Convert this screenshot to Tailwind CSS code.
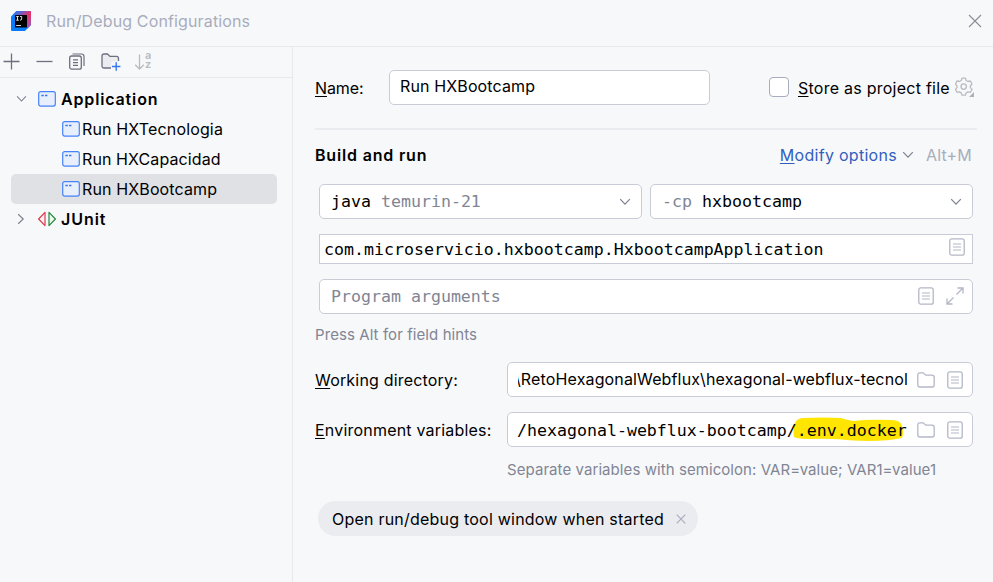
<!DOCTYPE html>
<html lang="es">
<head>
<meta charset="utf-8">
<title>Run/Debug Configurations</title>
<script src="https://cdn.jsdelivr.net/npm/@tailwindcss/browser@4"></script>
</head>
<body class="w-[993px] h-[582px] overflow-hidden bg-[#f7f8fa] text-black text-[16px] leading-[20px] font-[family-name:Inter,sans-serif] whitespace-nowrap">
<svg class="hidden">
  <symbol id="app" viewBox="0 0 18 16"><rect x=".7" y=".7" width="16.6" height="14.4" rx="2" fill="#e7effd" stroke="#4682fa" stroke-width="1.2"/><path d="M3.4 4.5h2.4M7 4.5h2.4" stroke="#3574f0" stroke-width="1.3"/></symbol>
  <symbol id="list" viewBox="0 0 16 18"><rect x=".8" y=".8" width="14.4" height="16.4" rx="2" fill="none" stroke="#b4b8c6" stroke-width="1.3"/><path d="M4 6h8M4 9h8M4 12h8" stroke="#b4b8c6" stroke-width="1.2"/></symbol>
  <symbol id="folder" viewBox="0 0 18 16"><path d="M.8 3.2Q.8.8 3 .8H6.2L8.8 3.2H15Q17.2 3.2 17.2 5.4V12.8Q17.2 15 15 15H3Q.8 15 .8 12.8Z" fill="none" stroke="#b4b8c6" stroke-width="1.3"/></symbol>
  <symbol id="chev" viewBox="0 0 12 8"><path d="M1.2 1.2 6 6.2 10.8 1.2" fill="none" stroke="#7c8090" stroke-width="1.2"/></symbol>
</svg>
<div class="flex flex-col h-full">
  <header class="h-[47px] border-b border-[#e8e9ed] flex items-center pl-[11px] pr-[11px] pb-[4px]">
    <svg class="w-[20px] h-[20px]" viewBox="0 0 20 20">
      <defs><linearGradient id="g" x1="5" y1="3" x2="18" y2="16" gradientUnits="userSpaceOnUse"><stop offset="0" stop-color="#3f6fe0"/><stop offset=".35" stop-color="#b0479a"/><stop offset=".5" stop-color="#f0305c"/><stop offset="1" stop-color="#9a58c0"/></linearGradient></defs>
      <path d="M0 5.500 5.500 0H19Q20 0 20 1V14L14 20H1Q0 20 0 19Z" fill="#087cfa"/>
      <path d="M2.500 3 5.500 0H19Q20 0 20 1V14L16 18V4H2.500Z" fill="url(#g)"/>
      <rect x="4" y="4" width="12" height="12.500" fill="#000"/>
      <path d="M5.200 5.500H7.800M6.500 5.500V9.200M5.200 9.200H7.800M9 5.500H10.700V8Q10.700 9.200 9 9.200M5.200 14.500H10" fill="none" stroke="#fff" stroke-width=".85"/>
    </svg>
    <span class="ml-[15px] text-[#a8adbd] tracking-[0.14px]">Run/Debug Configurations</span>
    <svg class="ml-auto w-[14px] h-[14px]" viewBox="0 0 14 14"><path d="M1 1 13 13M13 1 1 13" stroke="#898d96" stroke-width="1.1"/></svg>
  </header>
  <div class="flex flex-1">
    <aside class="w-[293px] border-r border-[#e8e9ed]">
      <div class="h-[31px] border-b border-[#e8e9ed] flex items-center pl-[3px] pb-[1px]">
        <svg class="w-[17px] h-[17px]" viewBox="0 0 17 17"><path d="M.5 8.500h16M8.500.5v16" stroke="#6c707e" stroke-width="1.3"/></svg>
        <svg class="ml-[16px] w-[17px] h-[17px]" viewBox="0 0 17 17"><path d="M.5 8.500h16" stroke="#6c707e" stroke-width="1.3"/></svg>
        <svg class="ml-[16px] w-[16px] h-[17px]" viewBox="0 0 16 17"><path d="M3.500 1H12.500Q15 1 15 3.500V13" fill="none" stroke="#6c707e" stroke-width="1.2"/><rect x=".7" y="3" width="11.600" height="13.200" rx="2" fill="#f7f8fa" stroke="#6c707e" stroke-width="1.3"/><path d="M4 6.800h5M4 9.600h5M4 12.400h5" stroke="#6c707e" stroke-width="1.2"/></svg>
        <svg class="ml-[16px] w-[20px] h-[19px]" viewBox="0 0 20 19"><path d="M10 16H3Q1 16 1 14V4Q1 2 3 2H6.500L9 4.400H15.500Q17.500 4.400 17.500 6.400V9" fill="#ebecf0" stroke="#6c707e" stroke-width="1.3"/><path d="M10.500 9.500H19V19H10.500Z" fill="#f7f8fa"/><path d="M11 14.500h8.400M15.200 10.300v8.400" stroke="#3574f0" stroke-width="1.4"/></svg>
        <div class="ml-[13px] flex text-[#b9bbc0]">
          <svg class="w-[11px] h-[18px]" viewBox="0 0 11 18"><path d="M5.500 1.500V16M1.200 11.800 5.500 16 9.800 11.800" fill="none" stroke="currentColor" stroke-width="1.3"/></svg>
          <div class="flex flex-col -mt-[2px] text-[11px] leading-[9px] font-semibold"><span>a</span><span>z</span></div>
        </div>
      </div>
      <div class="pt-[6px] pl-[11px] pr-[15px]">
        <div class="h-[30px] flex items-center pl-[5px] font-semibold"><svg class="w-[11px] h-[8px] mr-[11px]"><use href="#chev"/></svg><svg class="w-[18px] h-[16px] mr-[5px]"><use href="#app"/></svg><span class="tracking-[0.85px]">Application</span></div>
        <div class="h-[30px] flex items-center pl-[51px]"><svg class="w-[18px] h-[16px] mr-[2px]"><use href="#app"/></svg><span class="tracking-[0.15px]">Run HXTecnologia</span></div>
        <div class="h-[30px] flex items-center pl-[51px]"><svg class="w-[18px] h-[16px] mr-[2px]"><use href="#app"/></svg><span class="tracking-[0.1px]">Run HXCapacidad</span></div>
        <div class="h-[30px] flex items-center pl-[51px] rounded-[5px] bg-[#dfe1e5]"><svg class="w-[18px] h-[16px] mr-[2px]"><use href="#app"/></svg><span class="tracking-[0.13px]">Run HXBootcamp</span></div>
        <div class="h-[30px] flex items-center pl-[6px] font-semibold"><svg class="w-[8px] h-[12px] mr-[12px]" viewBox="0 0 8 12"><path d="M1.200 1.200 6.200 6 1.200 10.800" fill="none" stroke="#7c8090" stroke-width="1.2"/></svg><svg class="w-[20px] h-[16px] mr-[4px]" viewBox="0 0 20 16"><path d="M8 1.400V14.600L1.600 8Z" fill="#fff1f2" stroke="#db3b4b" stroke-width="1.2" stroke-linejoin="round"/><path d="M12 1.400V14.600L18.400 8Z" fill="#f0faf1" stroke="#208a3c" stroke-width="1.2" stroke-linejoin="round"/></svg><span class="tracking-[0.95px]">JUnit</span></div>
      </div>
    </aside>
    <main class="flex-1 pl-[22px] pr-[16px] flex flex-col">
      <div class="mt-[23px] h-[35px] flex items-center">
        <span class="w-[74px] tracking-[-0.1px]"><u class="underline-offset-2">N</u>ame:</span>
        <div class="w-[321px] h-[35px] rounded-[5px] border border-[#c9ccd6] bg-white flex items-center pl-[10px] pb-[3px]"><span class="tracking-[0.13px]">Run HXBootcamp</span></div>
        <div class="ml-[59px] mb-[2px] w-[20px] h-[20px] rounded-[4px] border border-[#a8adbd] bg-white"></div>
        <span class="ml-[9px] tracking-[0.25px]"><u class="underline-offset-2">S</u>tore as project file</span>
        <svg class="ml-auto mr-[3px] mb-[1px] w-[19px] h-[20px]" viewBox="0 0 19 20"><path d="M7 1.200H10.400L11.200 3.500 13 4.500 15.400 4 17 7 15.400 8.800V10.600L17 12.400 15.400 15.300 13 14.900 11.200 15.900 10.400 18.200H7L6.200 15.900 4.400 14.900 2 15.300.5 12.400 2 10.600V8.800L.5 7 2 4 4.400 4.500 6.200 3.500Z" fill="none" stroke="#b9bbc0" stroke-width="1.3" stroke-linejoin="round"/><circle cx="8.700" cy="9.600" r="2.700" fill="none" stroke="#b9bbc0" stroke-width="1.3"/><path d="M19 15V20H14Z" fill="#aeb0b6"/></svg>
      </div>
      <div class="mt-[23px] h-[2px] bg-[#ebecf0]"></div>
      <div class="mt-[14px] h-[22px] flex items-center">
        <span class="font-semibold tracking-[0.82px]">Build and run</span>
        <span class="ml-auto text-[#315fbd] tracking-[0.28px]"><u class="underline-offset-2">M</u>odify options</span>
        <svg class="w-[12px] h-[8px] ml-[5px]"><use href="#chev"/></svg>
        <span class="ml-[12px] mr-[5px] text-[#a8adbd] tracking-[0.2px]">Alt+M</span>
      </div>
      <div class="mt-[18px] ml-[4px] mr-[4px] flex gap-[8px] font-[family-name:'DejaVu_Sans_Mono',monospace] text-[16.6px]">
        <div class="flex-1 h-[35px] rounded-[5px] border border-[#c9ccd6] bg-white flex items-center pl-[11px] pr-[10px]"><span>java <span class="text-[#818594]">temurin-21</span></span><svg class="ml-auto w-[12px] h-[8px]"><use href="#chev"/></svg></div>
        <div class="flex-1 h-[35px] rounded-[5px] border border-[#c9ccd6] bg-white flex items-center pl-[11px] pr-[10px]"><span><span class="text-[#818594]">-cp</span> hxbootcamp</span><svg class="ml-auto w-[12px] h-[8px]"><use href="#chev"/></svg></div>
      </div>
      <div class="mt-[15px] ml-[4px] mr-[4px] h-[30px] border border-[#c9ccd6] bg-white flex items-center pl-[4px] pr-[7px] font-[family-name:'DejaVu_Sans_Mono',monospace] text-[16.6px]"><span class="pt-[2px]">com.microservicio.hxbootcamp.HxbootcampApplication</span><svg class="ml-auto mb-[4px] w-[16px] h-[18px]"><use href="#list"/></svg></div>
      <div class="mt-[15px] ml-[4px] mr-[4px] h-[35px] rounded-[5px] border border-[#c9ccd6] bg-white flex items-center pl-[11px] pr-[8px] font-[family-name:'DejaVu_Sans_Mono',monospace] text-[16.6px] text-[#818594]"><span>Program arguments</span><svg class="ml-auto mb-[2px] w-[16px] h-[18px]"><use href="#list"/></svg><svg class="ml-[12px] mb-[2px] w-[18px] h-[18px]" viewBox="0 0 18 18"><path d="M10.500 7.500 17 1M11.500 1H17V6.500M7.500 10.500 1 17M1 11.500V17H6.500" fill="none" stroke="#b4b8c6" stroke-width="1.3"/></svg></div>
      <div class="mt-[11px] h-[20px] text-[15px] text-[#818594] tracking-[0.08px]">Press Alt for field hints</div>
      <div class="mt-[17px] mr-[4px] h-[35px] flex items-center">
        <span class="w-[192px] tracking-[0.18px]"><u class="underline-offset-2">W</u>orking directory:</span>
        <div class="flex-1 h-[35px] rounded-[5px] border border-[#c9ccd6] bg-white flex items-center pl-[10px] pr-[9px]"><div class="w-[390px] overflow-hidden flex justify-end pb-[1px]"><span class="tracking-[0.14px]">\RetoHexagonalWebflux\hexagonal-webflux-tecnol</span></div><svg class="ml-auto w-[18px] h-[16px]"><use href="#folder"/></svg><svg class="ml-[12px] w-[16px] h-[18px]"><use href="#list"/></svg></div>
      </div>
      <div class="mt-[15px] mr-[4px] h-[35px] flex items-center">
        <span class="w-[192px] tracking-[0.2px]"><u class="underline-offset-2">E</u>nvironment variables:</span>
        <div class="flex-1 h-[35px] rounded-[5px] border border-[#c9ccd6] bg-white flex items-center pl-[9px] pr-[9px]"><div class="relative w-[391px] pt-[2px] font-[family-name:'DejaVu_Sans_Mono',monospace] text-[16.6px]"><svg class="absolute left-[276px] -top-[2px] w-[110px] h-[25px]" viewBox="0 0 110 25"><path d="M1 9Q2 2 9 1Q30 0 48 1Q54 3 60 4Q76 2 98 3Q108 3 109 9Q111 16 109 21Q90 25 60 23.500Q40 21 18 22Q5 22 1 20Q0 15 1 9Z" fill="#ffe500"/></svg><span class="relative">/hexagonal-webflux-bootcamp/.env.docker</span></div><svg class="ml-auto w-[18px] h-[16px]"><use href="#folder"/></svg><svg class="ml-[12px] w-[16px] h-[18px]"><use href="#list"/></svg></div>
      </div>
      <div class="mt-[13px] ml-[192px] h-[20px] text-[15px] text-[#818594] tracking-[0.07px]">Separate variables with semicolon: VAR=value; VAR1=value1</div>
      <div class="mt-[21px] ml-[3px] w-[380px] h-[35px] rounded-full bg-[#ebecf0] flex items-center pl-[14px] pr-[12px]"><span class="tracking-[0.22px]">Open run/debug tool window when started</span><svg class="ml-auto w-[10px] h-[10px]" viewBox="0 0 10 10"><path d="M.7.7 9.300 9.300M9.300.7.7 9.300" stroke="#a8adbd" stroke-width="1.2"/></svg></div>
    </main>
  </div>
</div>
</body></html>
